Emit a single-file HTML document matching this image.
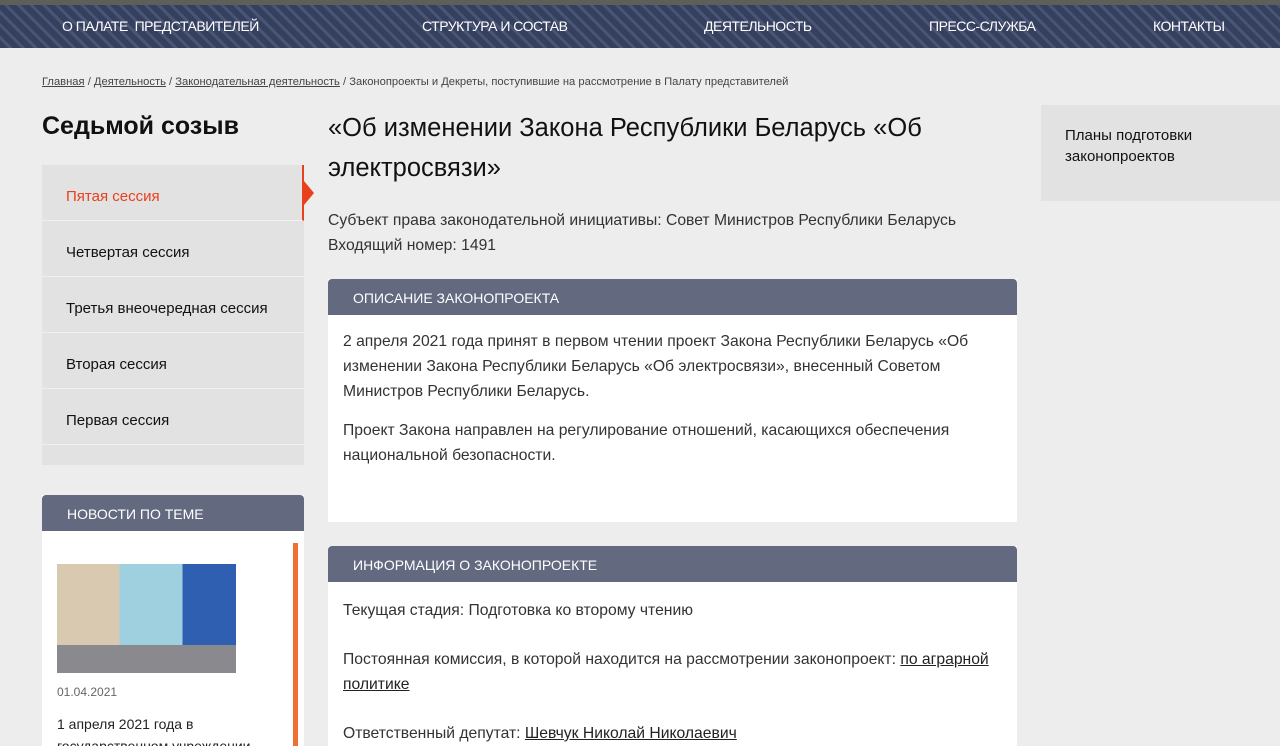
<!DOCTYPE html>
<html><head><meta charset="utf-8"><style>
*{margin:0;padding:0;box-sizing:border-box}
html,body{width:1280px;height:746px;overflow:hidden}
body{background:#ededed;font-family:"Liberation Sans","DejaVu Sans",sans-serif;color:#222;position:relative}
.nav{position:absolute;left:0;top:0;width:1280px;height:48px;background:
repeating-linear-gradient(45deg,#35405f 0 6px,#4a5575 6px 9px),#35405f;}
.nav::before{content:"";position:absolute;left:0;top:0;right:0;height:5px;background:#5e5f58}
.nav span{position:absolute;top:18px;color:#fff;font-size:14px;letter-spacing:-0.5px}
.bc{position:absolute;left:42px;top:76px;font-size:11.2px;color:#444}
.bc a{color:#444;text-decoration:underline}
h2{position:absolute;left:42px;top:112px;font-size:25px;font-weight:bold;color:#111}
.menu{position:absolute;left:42px;top:165px;width:262px;height:300px;background:#e2e2e2}
.menu div{height:56px;border-bottom:1px solid #f0f0f0;padding:23px 24px 0;font-size:15px;color:#111}
.menu .act{color:#e8401c;border-right:2px solid #e8401c}
.arrow{position:absolute;left:304px;top:181px;width:0;height:0;border-top:12px solid transparent;border-bottom:12px solid transparent;border-left:10px solid #e8401c}
.news{position:absolute;left:42px;top:495px;width:262px;height:251px;background:#fff;overflow:hidden}
.hd{background:#636a80;color:#fff;font-size:14px;height:36px;padding:11px 25px;border-radius:4px 4px 0 0}
.img{position:absolute;left:15px;top:69px;width:179px;height:109px;background:linear-gradient(90deg,#d9c9b0 0 35%,#9fd0e0 35% 70%,#2f5fb0 70%);}
.img::after{content:"";position:absolute;left:0;bottom:0;right:0;height:28px;background:#8a8a8e}
.bar{position:absolute;left:251px;top:48px;width:5px;height:220px;background:#f07033}
h1{position:absolute;left:328px;top:108px;width:680px;font-size:25.5px;font-weight:normal;line-height:40px;color:#111}
.p{position:absolute;left:328px;top:208px;font-size:15.7px;line-height:25px;color:#333}
.box{position:absolute;left:328px;width:689px;background:#fff;overflow:hidden}
.box .t{padding:14px 15px 0;font-size:15.7px;line-height:25px;color:#333}
.box a{color:#222;text-decoration:underline}
.side{position:absolute;left:1041px;top:105px;width:239px;height:96px;background:#e2e2e2;padding:20px 24px;font-size:15px;line-height:21px;color:#111}
</style></head><body>
<div class="nav">
<span style="left:62px">О ПАЛАТЕ&nbsp; ПРЕДСТАВИТЕЛЕЙ</span>
<span style="left:422px">СТРУКТУРА И СОСТАВ</span>
<span style="left:704px">ДЕЯТЕЛЬНОСТЬ</span>
<span style="left:929px">ПРЕСС-СЛУЖБА</span>
<span style="left:1153px">КОНТАКТЫ</span>
</div>
<div class="bc"><a>Главная</a> / <a>Деятельность</a> / <a>Законодательная деятельность</a> / Законопроекты и Декреты, поступившие на рассмотрение в Палату представителей</div>
<h2>Седьмой созыв</h2>
<div class="menu">
<div class="act">Пятая сессия</div>
<div>Четвертая сессия</div>
<div>Третья внеочередная сессия</div>
<div>Вторая сессия</div>
<div>Первая сессия</div>
</div>
<div class="arrow"></div>
<div class="news"><div class="hd">НОВОСТИ ПО ТЕМЕ</div>
<div class="img"></div><div class="bar"></div>
<div style="position:absolute;left:15px;top:190px;font-size:12px;color:#666">01.04.2021</div>
<div style="position:absolute;left:15px;top:218px;font-size:14px;line-height:22px;color:#222">1 апреля 2021 года в<br>государственном учреждении</div>
</div>
<h1>«Об изменении Закона Республики Беларусь «Об электросвязи»</h1>
<div class="p">Субъект права законодательной инициативы: Совет Министров Республики Беларусь<br>Входящий номер: 1491</div>
<div class="box" style="top:279px;height:243px"><div class="hd">ОПИСАНИЕ ЗАКОНОПРОЕКТА</div>
<div class="t">2 апреля 2021 года принят в первом чтении проект Закона Республики Беларусь «Об изменении Закона Республики Беларусь «Об электросвязи», внесенный Советом Министров Республики Беларусь.</div>
<div class="t" style="padding-top:14px">Проект Закона направлен на регулирование отношений, касающихся обеспечения национальной безопасности.</div></div>
<div class="box" style="top:546px;height:200px"><div class="hd">ИНФОРМАЦИЯ О ЗАКОНОПРОЕКТЕ</div>
<div class="t" style="padding-top:16px">Текущая стадия: Подготовка ко второму чтению</div>
<div class="t" style="padding-top:24px">Постоянная комиссия, в которой находится на рассмотрении законопроект: <a>по аграрной политике</a></div>
<div class="t" style="padding-top:24px">Ответственный депутат: <a>Шевчук Николай Николаевич</a></div></div>
<div class="side">Планы подготовки законопроектов</div>
</body></html>
